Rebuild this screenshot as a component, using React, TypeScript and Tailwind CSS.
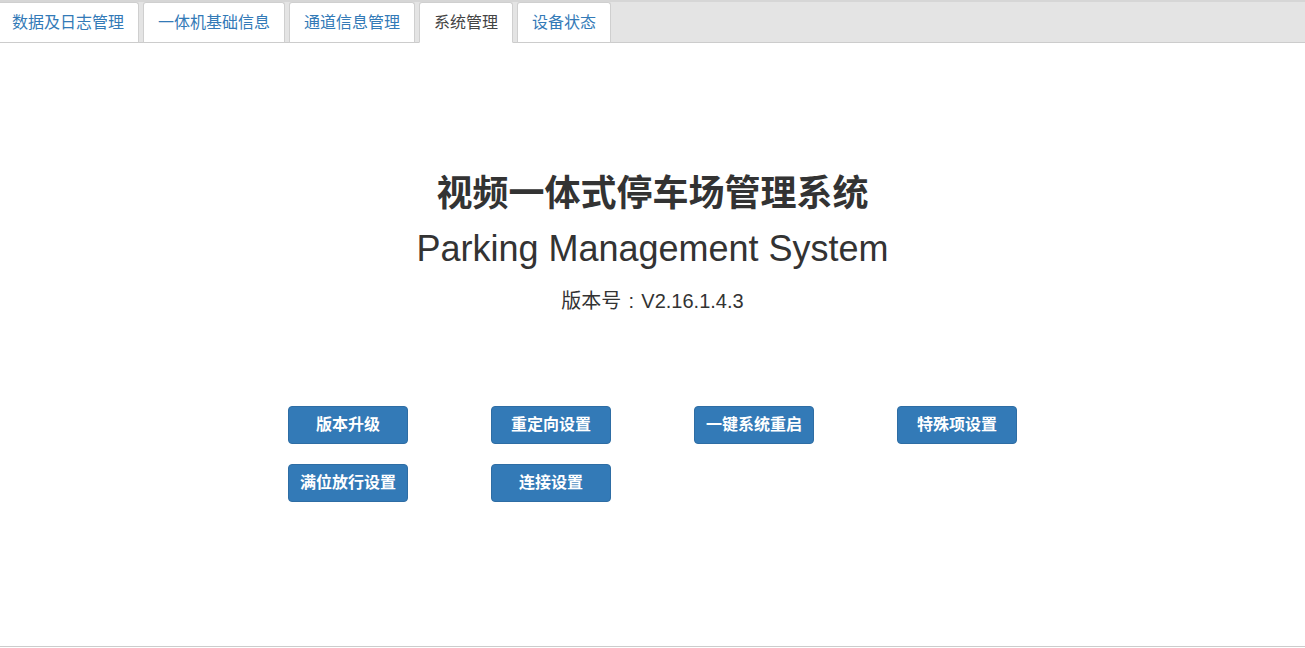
import React from "react";

const tabs = ["数据及日志管理", "一体机基础信息", "通道信息管理", "系统管理", "设备状态"];
const active = 3;

const buttons = ["版本升级", "重定向设置", "一键系统重启", "特殊项设置", "满位放行设置", "连接设置"];

export default function App() {
  return (
    <div
      className="w-[1305px] h-[648px] bg-white overflow-hidden"
      style={{ fontFamily: '"Liberation Sans", "Noto Sans CJK SC", sans-serif' }}
    >
      {/* tab bar */}
      <div className="h-[43px] bg-[#e4e4e4] border-t-2 border-[#d6d6d6] border-b border-b-[#cccccc] flex items-end gap-[4px]">
        {tabs.map((t, i) => (
          <div
            key={t}
            className={
              "h-[41px] mb-[-1px] px-[14px] flex items-center text-[16px] rounded-t-[3px] border border-[#cfcfcf] bg-white " +
              (i === 0 ? "ml-[-3px] " : "") +
              (i === active ? "border-b-white text-[#444444]" : "border-b-[#cccccc] text-[#337ab7]")
            }
          >
            {t}
          </div>
        ))}
      </div>

      {/* content */}
      <div className="h-[604px] border-b border-[#cccccc] flex flex-col items-center">
        <h1 className="mt-[128px] text-[36px] leading-[46px] font-bold text-[#333333]">视频一体式停车场管理系统</h1>
        <div className="mt-[11px] text-[36px] leading-[42px] text-[#333333]">Parking Management System</div>
        <div className="mt-[18px] text-[20px] leading-[26px] text-[#333333] flex">
          <span>版本号</span>
          <span className="inline-block w-[20px] text-center">:</span>
          <span>V2.16.1.4.3</span>
        </div>

        <div className="mt-[92px] w-[812px] grid grid-cols-4 gap-y-[20px]">
          {buttons.map((b) => (
            <div key={b} className="flex justify-center">
              <button className="w-[120px] h-[38px] rounded-[4px] bg-[#337ab7] border border-[#2e6da4] text-white text-[16px] font-bold">
                {b}
              </button>
            </div>
          ))}
        </div>
      </div>
    </div>
  );
}
